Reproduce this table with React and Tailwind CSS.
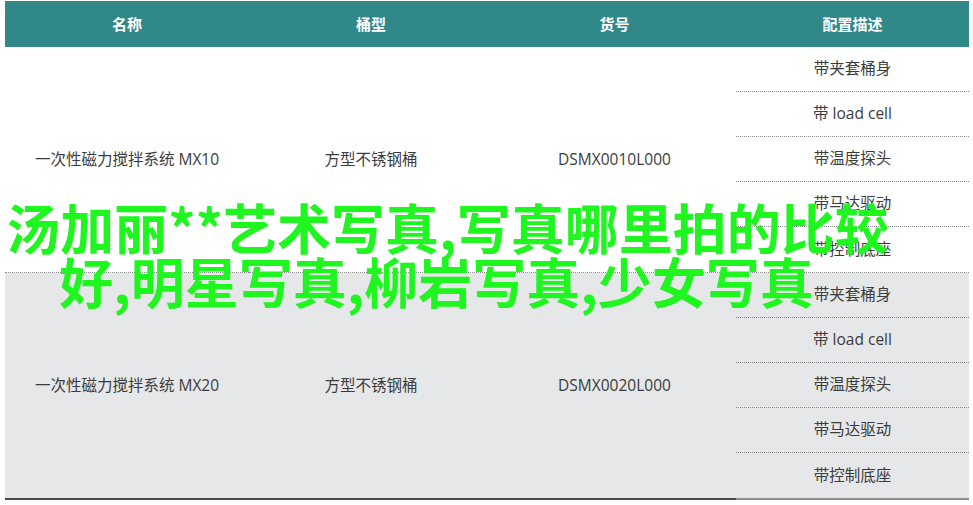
const groups = [
  {
    name: "一次性磁力搅拌系统 MX10",
    type: "方型不锈钢桶",
    sku: "DSMX0010L000",
    bg: "bg-white",
    last: false,
  },
  {
    name: "一次性磁力搅拌系统 MX20",
    type: "方型不锈钢桶",
    sku: "DSMX0020L000",
    bg: "bg-[#e6e7e9]",
    last: true,
  },
];

const options = ["带夹套桶身", "带 load cell", "带温度探头", "带马达驱动", "带控制底座"];

function Group({ g }) {
  const bottom = g.last
    ? "border-b-2 border-solid border-[#4a4a4a]"
    : "border-b border-dotted border-[#8a8a8a]";
  return (
    <div className={`flex ${g.bg}`}>
      <div className={`w-[244px] flex items-center justify-center ${bottom}`}>{g.name}</div>
      <div className={`w-[244px] flex items-center justify-center ${bottom}`}>{g.type}</div>
      <div className={`w-[243px] flex items-center justify-center ${bottom}`}>{g.sku}</div>
      <div
        className={`w-[233px] flex flex-col ${
          g.last ? "border-b-2 border-solid border-[#8c8c8c]" : "border-b border-dotted border-[#8a8a8a]"
        }`}
      >
        {options.map((o, i) => (
          <div
            key={o}
            className={`h-[45px] flex items-center justify-center ${
              i < options.length - 1 ? "border-b border-dotted border-[#8a8a8a]" : ""
            }`}
          >
            {o}
          </div>
        ))}
      </div>
    </div>
  );
}

export default function App() {
  return (
    <div
      className="relative w-[973px] h-[505px] bg-white overflow-hidden pt-[1px] pl-[5px]"
      style={{ fontFamily: '"Noto Sans CJK SC", "Noto Sans", sans-serif' }}
    >
      <div
        className="w-[964px] text-[15.5px] text-[#3c3c3c]"
        style={{ fontFamily: '"Open Sans", "Noto Sans CJK SC", sans-serif' }}
      >
        {/* header */}
        <div className="flex h-[46px] bg-[#318889] text-white font-bold text-[15px]">
          <div className="w-[244px] flex items-center justify-center">名称</div>
          <div className="w-[244px] flex items-center justify-center">桶型</div>
          <div className="w-[243px] flex items-center justify-center">货号</div>
          <div className="w-[233px] flex items-center justify-center">配置描述</div>
        </div>

        {groups.map((g) => (
          <Group key={g.sku} g={g} />
        ))}
      </div>

      {/* overlay title */}
      <div className="absolute left-0 top-[200px] w-[895px] text-center text-[54px] leading-[54px] font-bold text-[#1ff51f]">
        <div>汤加丽**艺术写真,写真哪里拍的比较</div>
        <div className="pr-[22px]">好,明星写真,柳岩写真,少女写真</div>
      </div>
    </div>
  );
}
